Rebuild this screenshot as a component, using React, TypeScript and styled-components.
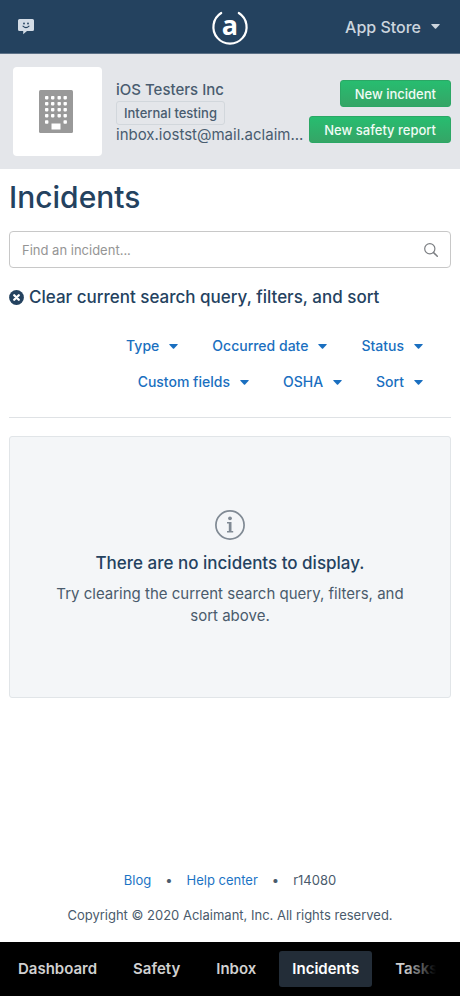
import React from "react";
import styled, { createGlobalStyle } from "styled-components";

const GlobalStyle = createGlobalStyle`
  *, *::before, *::after { box-sizing: border-box; }
  body {
    margin: 0;
    background: #fff;
    color: #4a5b6c;
    font-family: Inter, "Liberation Sans", sans-serif;
    font-size: 15px;
    line-height: 22px;
  }
  button, input { font: inherit; }
  h1, h2, p { margin: 0; }
`;

const Page = styled.div`
  display: flex;
  flex-direction: column;
  min-height: 100vh;
`;

const TopBar = styled.header`
  display: grid;
  grid-template-columns: 1fr auto 1fr;
  align-items: center;
  height: 54px;
  padding: 0 18px;
  background: #24425f;
  border-bottom: 1px solid #5d7288;
`;

const IconButton = styled.button`
  display: flex;
  justify-self: start;
  padding: 0;
  border: 0;
  background: none;
`;

const HomeLink = styled.a`
  display: flex;
`;

const AccountButton = styled.button`
  display: flex;
  align-items: center;
  justify-self: end;
  gap: 10px;
  padding: 0 2px;
  border: 0;
  background: none;
  color: #ccd5de;
  font-size: 16px;
  font-weight: 500;
`;

const OrgBanner = styled.section`
  display: flex;
  align-items: center;
  gap: 4px;
  padding: 13px 9px 13px 13px;
  background: #e4e6ea;
`;

const OrgLogo = styled.div`
  display: flex;
  flex: none;
  align-items: center;
  justify-content: center;
  width: 89px;
  height: 89px;
  margin-right: 10px;
  padding-right: 3px;
  border-radius: 4px;
  background: #fff;
`;

const OrgDetails = styled.div`
  flex: 1;
  min-width: 0;
  color: #495c6f;
`;

const OrgName = styled.div`
  font-weight: 500;
`;

const OrgTag = styled.span`
  display: block;
  width: fit-content;
  padding: 0 7px;
  border: 1px solid #d2d7dc;
  border-radius: 3px;
  font-size: 13px;
  font-weight: 500;
`;

const OrgEmail = styled.div`
  white-space: nowrap;
  line-height: 20px;
`;

const OrgActions = styled.div`
  display: flex;
  flex: none;
  flex-direction: column;
  align-items: flex-end;
  gap: 9px;
`;

const ActionButton = styled.button`
  height: 27px;
  padding: 0 14px;
  border: 1px solid #2ba765;
  border-radius: 3px;
  background: linear-gradient(#27bd70, #35a566);
  color: #f1fbf5;
  font-size: 13px;
  font-weight: 500;
  line-height: 24px;
`;

const Content = styled.main`
  padding: 8px 9px 0;
`;

const Title = styled.h1`
  color: #24425f;
  font-size: 30px;
  font-weight: 500;
  line-height: 40px;
`;

const SearchBox = styled.label`
  display: flex;
  align-items: center;
  height: 37px;
  margin-top: 14px;
  padding: 0 12px;
  border: 1px solid #c8c8c8;
  border-radius: 4px;
`;

const SearchInput = styled.input`
  flex: 1;
  min-width: 0;
  padding: 0;
  border: 0;
  outline: 0;
  background: none;
  font-size: 13px;
  &::placeholder { color: #959595; opacity: 1; }
`;

const ClearButton = styled.button`
  display: flex;
  align-items: center;
  gap: 5px;
  margin-top: 18px;
  padding: 0;
  border: 0;
  background: none;
  color: #24425f;
  font-size: 17px;
  font-weight: 500;
`;

const Filters = styled.div`
  display: flex;
  flex-wrap: wrap;
  justify-content: flex-end;
  gap: 14px 34px;
  margin-top: 27px;
  padding: 0 28px 24px 0;
  border-bottom: 1px solid #dfe2e5;
`;

const FilterButton = styled.button`
  display: flex;
  align-items: center;
  gap: 10px;
  padding: 0;
  border: 0;
  background: none;
  color: #1a6fc0;
  font-size: 14px;
  font-weight: 500;
`;

const EmptyPanel = styled.section`
  display: flex;
  flex-direction: column;
  align-items: center;
  margin-top: 18px;
  padding: 73px 40px 70px;
  border: 1px solid #e1e5e8;
  border-radius: 3px;
  background: #f4f6f8;
  text-align: center;
`;

const EmptyHeading = styled.h2`
  margin: 12px 0 9px;
  color: #24425f;
  font-size: 17px;
  font-weight: 500;
  line-height: 22px;
`;

const Footer = styled.footer`
  margin-top: auto;
  padding: 0 9px 16px;
  font-size: 13px;
  text-align: center;
`;

const FooterLinks = styled.div`
  display: flex;
  justify-content: center;
  gap: 14px;
  margin-bottom: 13px;
`;

const FooterLink = styled.a`
  color: #1b74c5;
  text-decoration: none;
`;

const BottomNav = styled.nav`
  position: relative;
  display: flex;
  gap: 10px;
  align-items: center;
  height: 54px;
  padding: 0 28px 0 5px;
  overflow: hidden;
  background: #000;
  &::after {
    content: "";
    position: absolute;
    inset: 0 0 0 auto;
    width: 56px;
    background: linear-gradient(to right, transparent, #000 32px);
    pointer-events: none;
  }
`;

const NavLink = styled.a<{ $active?: boolean }>`
  flex: none;
  padding: 7px 13px;
  border-radius: 3px;
  background: ${(p) => (p.$active ? "#232d38" : "transparent")};
  color: ${(p) => (p.$active ? "#fff" : "#d0d0d0")};
  font-weight: 600;
  text-decoration: none;
`;

const Caret = () => (
  <svg width="9" height="5" viewBox="0 0 9 5" aria-hidden="true">
    <path d="M.8 0h7.4q1 .1.4.8L5.1 4.5q-.6.6-1.2 0L.4.8Q-.2.1.8 0Z" fill="currentColor" />
  </svg>
);

const ChatIcon = () => (
  <svg width="16" height="17" viewBox="0 0 16 17" aria-hidden="true">
    <path d="M1.500 1h13A1.500 1.500 0 0 1 16 2.500v9a1.500 1.500 0 0 1-1.500 1.500H9L5.200 16.200V13H1.500A1.500 1.500 0 0 1 0 11.500v-9A1.500 1.500 0 0 1 1.500 1Z" fill="#d3dce6" />
    <circle cx="6" cy="5.500" r=".9" fill="#24425f" />
    <circle cx="10" cy="5.500" r=".9" fill="#24425f" />
    <path d="M5 8.200q3 2.800 6 0" fill="none" stroke="#24425f" strokeWidth="1.100" strokeLinecap="round" />
  </svg>
);

const LogoMark = styled.svg`
  overflow: visible;
`;

const Logo = () => (
  <LogoMark width="36" height="36" viewBox="0 0 36 36" role="img" aria-label="Aclaimant">
    <path d="M9.200 4A16.600 16.600 0 1 0 26.800 4" fill="none" stroke="#fff" strokeWidth="2.200" strokeLinecap="round" />
    <text x="18" y="25.500" textAnchor="middle" fontFamily="Open Sans, sans-serif" fontSize="27" fontWeight="700" fill="#fff">a</text>
  </LogoMark>
);

const BuildingIcon = () => (
  <svg width="34" height="43" viewBox="0 0 34 43" aria-hidden="true">
    <rect width="34" height="43" rx="1.500" fill="#999" />
    {[6, 12, 18, 24].map((y) =>
      [6, 12, 18.500, 24.500].map((x) => <rect key={`${x}-${y}`} x={x} y={y} width="3.400" height="3.400" rx=".8" fill="#fff" />)
    )}
    <rect x="6" y="30.300" width="3.400" height="3.400" rx=".8" fill="#fff" />
    <rect x="24.500" y="30.300" width="3.400" height="3.400" rx=".8" fill="#fff" />
    <rect x="12.500" y="33.500" width="9" height="6" fill="#fff" />
  </svg>
);

const SearchIcon = () => (
  <svg width="14" height="14" viewBox="0 0 14 14" fill="none" stroke="#7c7f83" aria-hidden="true">
    <circle cx="5.800" cy="5.800" r="5.100" strokeWidth="1.200" />
    <path d="m9.600 9.600 3.700 3.700" strokeWidth="1.500" strokeLinecap="round" />
  </svg>
);

const ClearIcon = () => (
  <svg width="15" height="15" viewBox="0 0 15 15" aria-hidden="true">
    <circle cx="7.500" cy="7.500" r="7.400" fill="#24425f" />
    <path d="m5.200 5.200 4.600 4.600m0-4.600L5.200 9.800" stroke="#fff" strokeWidth="2.300" strokeLinecap="round" />
  </svg>
);

const InfoIcon = () => (
  <svg width="30" height="30" viewBox="0 0 30 30" aria-hidden="true">
    <circle cx="15" cy="15" r="14.100" fill="none" stroke="#808a94" strokeWidth="1.700" />
    <circle cx="15" cy="8.300" r="1.900" fill="#808a94" />
    <path d="M12 11.900h4.500v9h1.700v1.600H12v-1.600h1.800v-7.400H12Z" fill="#808a94" />
  </svg>
);

const filters = ["Type", "Occurred date", "Status", "Custom fields", "OSHA", "Sort"];
const navItems = ["Dashboard", "Safety", "Inbox", "Incidents", "Tasks"];

export default function App() {
  return (
    <Page>
      <GlobalStyle />
      <TopBar>
        <IconButton type="button" aria-label="Messages"><ChatIcon /></IconButton>
        <HomeLink href="#home"><Logo /></HomeLink>
        <AccountButton type="button">App Store <Caret /></AccountButton>
      </TopBar>
      <OrgBanner>
        <OrgLogo><BuildingIcon /></OrgLogo>
        <OrgDetails>
          <OrgName>iOS Testers Inc</OrgName>
          <OrgTag>Internal testing</OrgTag>
          <OrgEmail>inbox.iostst@mail.aclaim...</OrgEmail>
        </OrgDetails>
        <OrgActions>
          <ActionButton type="button">New incident</ActionButton>
          <ActionButton type="button">New safety report</ActionButton>
        </OrgActions>
      </OrgBanner>
      <Content>
        <Title>Incidents</Title>
        <SearchBox>
          <SearchInput type="text" placeholder="Find an incident..." aria-label="Find an incident" />
          <SearchIcon />
        </SearchBox>
        <ClearButton type="button"><ClearIcon />Clear current search query, filters, and sort</ClearButton>
        <Filters>
          {filters.map((name) => (
            <FilterButton key={name} type="button">{name}<Caret /></FilterButton>
          ))}
        </Filters>
        <EmptyPanel>
          <InfoIcon />
          <EmptyHeading>There are no incidents to display.</EmptyHeading>
          <p>Try clearing the current search query, filters, and sort above.</p>
        </EmptyPanel>
      </Content>
      <Footer>
        <FooterLinks>
          <FooterLink href="#blog">Blog</FooterLink>
          <span>•</span>
          <FooterLink href="#help">Help center</FooterLink>
          <span>•</span>
          <span>r14080</span>
        </FooterLinks>
        <p>Copyright © 2020 Aclaimant, Inc. All rights reserved.</p>
      </Footer>
      <BottomNav>
        {navItems.map((name) => (
          <NavLink key={name} href={`#${name.toLowerCase()}`} $active={name === "Incidents"}>{name}</NavLink>
        ))}
      </BottomNav>
    </Page>
  );
}
